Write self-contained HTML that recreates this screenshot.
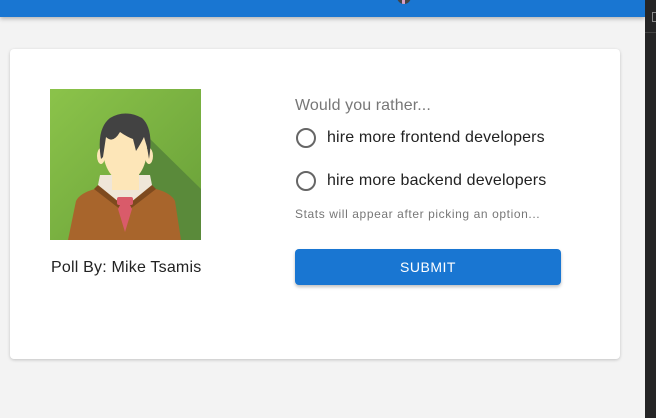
<!DOCTYPE html>
<html><head><style>
*{margin:0;padding:0;box-sizing:border-box}
body{width:656px;height:418px;background:#f3f3f3;font-family:"Liberation Sans",Arial,sans-serif;position:relative;overflow:hidden}
.hdr{position:absolute;left:0;top:0;width:645px;height:17px;background:#1976d2;box-shadow:0 2px 4px rgba(0,0,0,.25)}
.dark{position:absolute;left:645px;top:0;width:11px;height:418px;background:#252526}
.dark i{position:absolute;left:0;top:32px;width:11px;height:1px;background:#444}
.dark b{position:absolute;left:7px;top:12px;width:6px;height:10px;border:1px solid #888}
.av{position:absolute;left:397px;top:-10px;width:14px;height:14px;border-radius:50%;background:#444;overflow:hidden}
.av:after{content:"";position:absolute;left:5px;top:6px;width:3px;height:8px;background:#d8a0c8}
.card{position:absolute;left:10px;top:49px;width:610px;height:310px;background:#fff;border-radius:4px;box-shadow:0 1px 3px rgba(0,0,0,.2)}
.img{position:absolute;left:40px;top:40px;width:151px;height:151px}
.by{position:absolute;left:41px;top:210px;font-size:16px;color:#222;letter-spacing:.2px}
.q{position:absolute;left:285px;top:48px;font-size:16px;color:#777;letter-spacing:.1px}
.opt{position:absolute;left:285px;font-size:16px;color:#222;display:flex;align-items:center;letter-spacing:.15px}
.opt span{width:20px;height:20px;border:2px solid #666;border-radius:50%;margin-right:11px;margin-left:1px}
.st{position:absolute;left:285px;top:158px;font-size:12px;color:#777;letter-spacing:.6px}
.btn{position:absolute;left:285px;top:200px;width:266px;height:36px;background:#1976d2;border-radius:4px;color:#fff;font-size:14px;text-align:center;line-height:36px;letter-spacing:.5px;box-shadow:0 2px 3px rgba(0,0,0,.25)}
</style></head><body>
<div class="hdr"></div><div class="av"></div>
<div class="dark"><b></b><i></i></div>
<div class="card">
<svg class="img" viewBox="0 0 151 151">
<defs><linearGradient id="g" x1="0" y1="0" x2="1" y2="1"><stop offset="0" stop-color="#8bc34a"/><stop offset="1" stop-color="#689f38"/></linearGradient></defs>
<rect width="151" height="151" fill="url(#g)"/>
<polygon points="95,45 151,100 151,151 110,151 75,100" fill="#5a8a3a"/>
<path d="M18,151 L26,112 Q30,104 45,100 L106,100 Q121,104 125,112 L131,151Z" fill="#a8652c"/>
<path d="M44,100 L75,124 L106,100 L102,96 L75,116 L48,96Z" fill="#7e4a1e"/>
<path d="M48,96 L75,118 L102,96 L100,86 L50,86Z" fill="#efe6d8"/>
<path d="M68,120 L75,143 L82,120 L79,114 L71,114Z" fill="#d95b6a"/>
<rect x="67" y="108" width="16" height="8" rx="2" fill="#d95b6a"/>
<rect x="62" y="75" width="27" height="26" fill="#fde6b8"/>
<ellipse cx="75" cy="60" rx="22" ry="33" fill="#fde6b8"/>
<ellipse cx="51" cy="67" rx="4" ry="8" fill="#fde6b8"/>
<ellipse cx="99" cy="67" rx="4" ry="8" fill="#fde6b8"/>
<path d="M51,70 Q46,40 60,29 Q75,20 92,29 Q104,40 99,70 L97,58 L94,48 Q90,56 86,62 L83,50 Q77,48 70,43 Q63,55 56,48 L53,68Z" fill="#424242"/>
</svg>
<div class="by">Poll By: Mike Tsamis</div>
<div class="q">Would you rather...</div>
<div class="opt" style="top:79px"><span></span>hire more frontend developers</div>
<div class="opt" style="top:122px"><span></span>hire more backend developers</div>
<div class="st">Stats will appear after picking an option...</div>
<div class="btn">SUBMIT</div>
</div>
</body></html>
